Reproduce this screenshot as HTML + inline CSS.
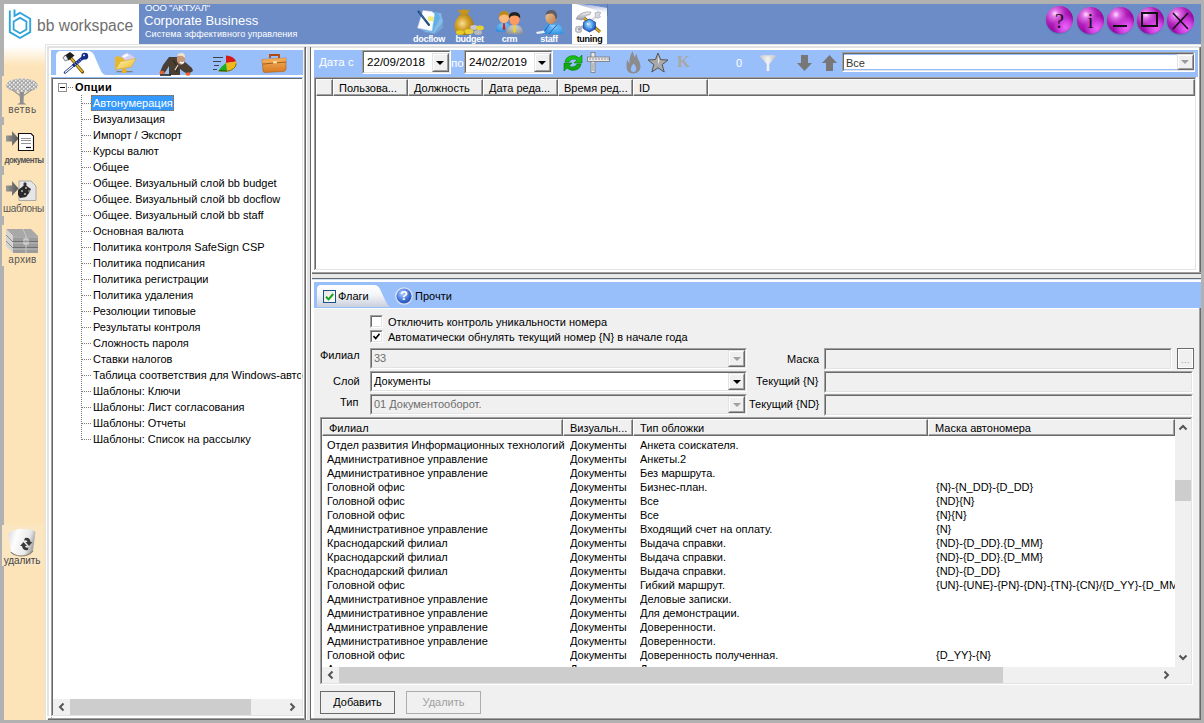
<!DOCTYPE html>
<html><head><meta charset="utf-8"><style>
html,body{margin:0;padding:0;width:1204px;height:723px;overflow:hidden;background:#b1b1b1}
body{position:relative;font-family:"Liberation Sans", sans-serif;font-size:11px}
div,svg{position:absolute}
.t{white-space:nowrap}
</style></head><body>
<div style="left:0;top:0;width:1204px;height:723px;background:#b1b1b1"></div>
<div style="left:4px;top:4px;width:135px;height:40px;background:#fff"></div>
<div style="left:139px;top:4px;width:1062px;height:40px;background:#6c8cc8"></div>
<div style="left:4px;top:44px;width:41px;height:676px;background:linear-gradient(#fff 0px,#fff 2px,#fde4b8 22px,#fde4b8 100%)"></div>
<div style="left:45px;top:44px;width:1156px;height:676px;background:#f0f0f0"></div>
<div style="left:45px;top:44px;width:1156px;height:2px;background:#fff"></div>
<svg style="left:0px;top:0px" width="40" height="44" viewBox="0 0 40 44">
<path d="M14.5 9.5 V15.8 L20 12.8 L30.2 18.8 V32.2 L20 38 L9.8 32.2 V10.5" fill="none" stroke="#2ea3dc" stroke-width="1.9"/>
<path d="M13.6 21.5 L20 17.9 L26.4 21.5 V29.5 L20 33.2 L13.6 29.5 Z" fill="none" stroke="#2ea3dc" stroke-width="1.8"/>
</svg>
<div class="t" style="left:37px;top:16px;height:20px;line-height:20px;font-size:15.6px;color:#6f6f6f;letter-spacing:0px">bb workspace</div>
<div class="t" style="left:145px;top:2px;height:12px;line-height:12px;font-size:9.5px;color:#ffffff;letter-spacing:-0.2px">ООО "АКТУАЛ"</div>
<div class="t" style="left:144px;top:13px;height:16px;line-height:16px;font-size:13px;color:#fff">Corporate Business</div>
<div class="t" style="left:145px;top:28px;height:12px;line-height:12px;font-size:9px;color:#fff;letter-spacing:0.05px">Система эффективного управления</div>
<div style="left:572px;top:4px;width:35px;height:40px;background:#fff"></div>
<svg style="left:572px;top:4px" width="36" height="12" viewBox="0 0 36 12"><defs><linearGradient id="curl" x1="0" y1="0" x2="0" y2="1"><stop offset="0" stop-color="#8ea0cc"/><stop offset="1" stop-color="#fff" stop-opacity="0"/></linearGradient></defs><path d="M4 0 Q20 1 35 4 L35 11 Q20 4 4 0 Z" fill="url(#curl)"/><path d="M6 0 L35 0 L35 4 Q20 0.8 6 0 Z" fill="#6c8cc8"/><rect x="35" y="0" width="1" height="40" fill="#5a78b0"/></svg>
<div class="t" style="left:404px;top:33px;width:50px;text-align:center;height:12px;line-height:12px;font-size:9px;font-weight:bold;letter-spacing:-0.3px;color:#fff">docflow</div>
<div class="t" style="left:444.5px;top:33px;width:50px;text-align:center;height:12px;line-height:12px;font-size:9px;font-weight:bold;letter-spacing:-0.3px;color:#fff">budget</div>
<div class="t" style="left:484.5px;top:33px;width:50px;text-align:center;height:12px;line-height:12px;font-size:9px;font-weight:bold;letter-spacing:-0.3px;color:#fff">crm</div>
<div class="t" style="left:524px;top:33px;width:50px;text-align:center;height:12px;line-height:12px;font-size:9px;font-weight:bold;letter-spacing:-0.3px;color:#fff">staff</div>
<div class="t" style="left:564.5px;top:33px;width:50px;text-align:center;height:12px;line-height:12px;font-size:9px;font-weight:bold;letter-spacing:-0.3px;color:#000">tuning</div>
<svg style="left:415px;top:9px" width="30" height="26" viewBox="0 0 30 26">
<path d="M9 23 L20 25 L28 19 L27 9 Z" fill="#7ab0dc" opacity="0.7"/>
<path d="M8 22 L19 24 L28 13 L26 4 L18 4 Z" fill="#8cc4ec" opacity="0.75"/>
<path d="M6 21 L18 23 L25 9 L22 3 L18 3 Z" fill="#5fb0e8"/>
<path d="M2.5 19 L8 1.5 L17 2.5 L19.5 5 L17 22 Z" fill="#fbfcff" stroke="#c8d4e4" stroke-width="0.5"/>
<path d="M13.5 7 L19 8 L18 12.5 L12.5 11.5 Z" fill="#f2ec78"/>
<path d="M3.5 2.5 L14 16" stroke="#1e4c7c" stroke-width="2.1" stroke-linecap="round"/>
<path d="M4 3 L10 11" stroke="#4a7cae" stroke-width="0.7"/>
</svg>
<svg style="left:452px;top:8px" width="34" height="28" viewBox="0 0 34 28">
<defs><radialGradient id="bag" cx="0.4" cy="0.45" r="0.65"><stop offset="0" stop-color="#f8dc96"/><stop offset="0.45" stop-color="#d4a22a"/><stop offset="1" stop-color="#9a7010"/></radialGradient></defs>
<path d="M5 1.5 Q9 3 12 1 Q15 3 18 1.5 L15.5 6 L9 6 Z" fill="#c8941e"/>
<path d="M9 6 L15.5 6 Q23 12 22 21 Q20 27 12 27 Q3 27 2.5 20 Q2 12 9 6 Z" fill="url(#bag)"/>
<ellipse cx="8" cy="24.5" rx="4" ry="2.3" fill="#e6cc20"/>
<ellipse cx="17" cy="23.5" rx="4.5" ry="2.6" fill="#e8d030"/>
<ellipse cx="22" cy="19.5" rx="3.8" ry="2.4" fill="#c8c8cc"/>
<ellipse cx="28" cy="20" rx="3.8" ry="2.4" fill="#e8d030"/>
<ellipse cx="26" cy="24.5" rx="4" ry="2.5" fill="#b8b8bc"/>
</svg>
<svg style="left:494px;top:9px" width="30" height="26" viewBox="0 0 30 26">
<defs><radialGradient id="bs" cx="0.5" cy="0.3" r="0.8"><stop offset="0" stop-color="#7cc8f8"/><stop offset="1" stop-color="#2a86dc"/></radialGradient>
<radialGradient id="gs" cx="0.5" cy="0.3" r="0.8"><stop offset="0" stop-color="#d0d0d0"/><stop offset="1" stop-color="#8a8a8a"/></radialGradient></defs>
<path d="M1.5 22 Q1.5 14 10 13.5 Q17.5 14 17.5 22 Q16 23 10 23 Q3 23 1.5 22 Z" fill="url(#bs)"/>
<path d="M9.2 14 L10.8 14 L11.3 20 L10 21.5 L8.7 20 Z" fill="#d42020"/>
<ellipse cx="10" cy="8.5" rx="5" ry="5.8" fill="#fbb878"/>
<path d="M5 8.5 Q4.5 2 10.5 2 Q15.5 2 15 8 Q14 5.5 10 5.5 Q6 6 5 8.5 Z" fill="#c08818"/>
<path d="M12 24.5 Q12 16 20.5 15.5 Q29 16 29 24.5 Q27 25.5 20.5 25.5 Q14 25.5 12 24.5 Z" fill="url(#gs)"/>
<path d="M19.7 16 L21.3 16 L21.8 22.5 L20.5 24 L19.2 22.5 Z" fill="#f0d020"/>
<ellipse cx="20.5" cy="10" rx="5.2" ry="6.2" fill="#fc9a60"/>
<path d="M15 9.5 Q14 3 20.5 3 Q27 3 26 9.5 Q24.5 6.5 20.5 6.5 Q16.5 6.5 15 9.5 Z" fill="#222"/>
</svg>
<svg style="left:535px;top:9px" width="29" height="26" viewBox="0 0 29 26">
<defs><radialGradient id="shirt" cx="0.6" cy="0.4" r="0.7"><stop offset="0" stop-color="#6ec4fa"/><stop offset="1" stop-color="#2a8ee0"/></radialGradient>
<linearGradient id="skin" x1="0" y1="0" x2="1" y2="1"><stop offset="0" stop-color="#f4c89a"/><stop offset="1" stop-color="#b87a48"/></linearGradient></defs>
<path d="M8 25 Q8 16 14 14.5 L22 14.5 Q28 16 28 25 Z" fill="url(#shirt)"/>
<path d="M14 16 L18 19 L22 16" fill="#8ec8f0"/>
<ellipse cx="16" cy="8.5" rx="5.5" ry="6.5" fill="url(#skin)"/>
<path d="M10.5 6 Q11 1 16.5 1 Q22.5 1 22 9 L20.5 10 Q20 4.5 16 4.5 Q12 4.5 10.5 6 Z" fill="#5e5e62"/>
<path d="M14 15.5 L8.5 24 M22 15.5 L14 25" stroke="#4a4aa0" stroke-width="0.9"/>
<path d="M1 23 L9 21.5 L10 24 L2 25 Z" fill="#e8eef6"/>
</svg>
<svg style="left:575px;top:11px" width="28" height="22" viewBox="0 0 28 22">
<defs><radialGradient id="glb" cx="0.45" cy="0.4" r="0.65"><stop offset="0" stop-color="#bfe4ff"/><stop offset="0.5" stop-color="#4a9ae8"/><stop offset="1" stop-color="#1a3fb0"/></radialGradient>
<linearGradient id="slv" x1="0" y1="0" x2="0" y2="1"><stop offset="0" stop-color="#f0f0f4"/><stop offset="1" stop-color="#9a9aa8"/></linearGradient></defs>
<path d="M3 19 L23 4" stroke="url(#slv)" stroke-width="2.6"/>
<circle cx="3.5" cy="18.5" r="2.8" fill="none" stroke="#b8b8c0" stroke-width="1.8"/>
<path d="M20 2 Q23 -0.5 26 2 L24 4 L25.5 6 Q23 8 20.5 6.5 Z" fill="#d8d8e0" stroke="#9a9aa8" stroke-width="0.6"/>
<path d="M9 7 L25 21" stroke="#8a6a10" stroke-width="3"/>
<path d="M9 7 L25 21" stroke="#e0b020" stroke-width="1.6"/>
<path d="M1 8 L3 5 Q8 0 16 1 L15 3.5 Q11 3.5 9 7 L7 9 Z" fill="url(#slv)" stroke="#8a8a96" stroke-width="0.6"/>
<path d="M14.5 8 L20.5 11.3 V17.7 L14.5 21 L8.5 17.7 V11.3 Z" fill="url(#glb)" stroke="#1a3aa0" stroke-width="0.7"/>
<circle cx="12.5" cy="13" r="0.8" fill="#fff"/><circle cx="16" cy="16" r="0.6" fill="#fff"/>
</svg>
<div style="left:1045.0px;top:7.0px;width:28px;height:28px;border-radius:50%;background:radial-gradient(circle at 50% 50%,rgba(30,60,120,0.45) 55%,rgba(30,60,120,0) 72%)"></div>
<div style="left:1046.0px;top:6.0px;width:27px;height:27px;border-radius:50%;background:radial-gradient(circle at 72% 78%,#f060f8 0%,#d040e0 22%,rgba(160,0,170,0) 45%),radial-gradient(circle at 33% 28%,#fde0fd 0%,#e070e8 14%,#b020b8 40%,#9000a0 70%,#a010b0 100%)"></div>
<div style="left:1075.5px;top:8.0px;width:28px;height:28px;border-radius:50%;background:radial-gradient(circle at 50% 50%,rgba(30,60,120,0.45) 55%,rgba(30,60,120,0) 72%)"></div>
<div style="left:1076.5px;top:7.0px;width:27px;height:27px;border-radius:50%;background:radial-gradient(circle at 72% 78%,#f060f8 0%,#d040e0 22%,rgba(160,0,170,0) 45%),radial-gradient(circle at 33% 28%,#fde0fd 0%,#e070e8 14%,#b020b8 40%,#9000a0 70%,#a010b0 100%)"></div>
<div style="left:1105.5px;top:7.5px;width:28px;height:28px;border-radius:50%;background:radial-gradient(circle at 50% 50%,rgba(30,60,120,0.45) 55%,rgba(30,60,120,0) 72%)"></div>
<div style="left:1106.5px;top:6.5px;width:27px;height:27px;border-radius:50%;background:radial-gradient(circle at 72% 78%,#f060f8 0%,#d040e0 22%,rgba(160,0,170,0) 45%),radial-gradient(circle at 33% 28%,#fde0fd 0%,#e070e8 14%,#b020b8 40%,#9000a0 70%,#a010b0 100%)"></div>
<div style="left:1135.5px;top:7.5px;width:28px;height:28px;border-radius:50%;background:radial-gradient(circle at 50% 50%,rgba(30,60,120,0.45) 55%,rgba(30,60,120,0) 72%)"></div>
<div style="left:1136.5px;top:6.5px;width:27px;height:27px;border-radius:50%;background:radial-gradient(circle at 72% 78%,#f060f8 0%,#d040e0 22%,rgba(160,0,170,0) 45%),radial-gradient(circle at 33% 28%,#fde0fd 0%,#e070e8 14%,#b020b8 40%,#9000a0 70%,#a010b0 100%)"></div>
<div style="left:1165.5px;top:7.5px;width:28px;height:28px;border-radius:50%;background:radial-gradient(circle at 50% 50%,rgba(30,60,120,0.45) 55%,rgba(30,60,120,0) 72%)"></div>
<div style="left:1166.5px;top:6.5px;width:27px;height:27px;border-radius:50%;background:radial-gradient(circle at 72% 78%,#f060f8 0%,#d040e0 22%,rgba(160,0,170,0) 45%),radial-gradient(circle at 33% 28%,#fde0fd 0%,#e070e8 14%,#b020b8 40%,#9000a0 70%,#a010b0 100%)"></div>
<div class="t" style="left:1052px;top:11px;width:15px;text-align:center;font-family:'Liberation Serif',serif;font-size:20px;line-height:20px;color:#111">?</div>
<div class="t" style="left:1083px;top:11px;width:15px;text-align:center;font-family:'Liberation Serif',serif;font-size:20px;line-height:20px;color:#111">i</div>
<div style="left:1113px;top:25px;width:14px;height:2px;background:#111"></div>
<div style="left:1141px;top:12px;width:17px;height:15px;border:2px solid #111;box-sizing:border-box"></div>
<svg style="left:1172px;top:12px" width="17" height="18" viewBox="0 0 17 18"><path d="M1 1 L16 17 M16 1 L1 17" stroke="#111" stroke-width="1.6"/></svg>
<div style="left:2px;top:76px;width:2px;height:41px;background:#fde4b8"></div>
<div style="left:2px;top:125px;width:2px;height:41px;background:#fde4b8"></div>
<div style="left:2px;top:175px;width:2px;height:41px;background:#fde4b8"></div>
<div style="left:2px;top:225px;width:2px;height:41px;background:#fde4b8"></div>
<div style="left:2px;top:525px;width:2px;height:41px;background:#fde4b8"></div>
<svg style="left:5px;top:78px" width="34" height="28" viewBox="0 0 34 28">
<defs><pattern id="spk" width="4" height="4" patternUnits="userSpaceOnUse"><rect width="4" height="4" fill="#b4b4b4"/><rect x="0" y="0" width="1.5" height="1.5" fill="#f6f6f6"/><rect x="2" y="2" width="1.5" height="1.5" fill="#e8e8e8"/><rect x="2.5" y="0" width="1" height="1" fill="#888"/><rect x="0.5" y="2.5" width="1" height="1" fill="#999"/></pattern></defs>
<path d="M1 8 Q2 3 8 1.5 Q17 -0.5 26 1.5 Q32 3 33 8 Q33 11 27 12.5 Q21 13.5 18.5 14.5 L15.5 14.5 Q13 13.5 7 12.5 Q1 11 1 8 Z" fill="url(#spk)"/>
<path d="M14.5 14 L15 24.5 L12 26.5 L21.5 26.5 L18.5 24.5 L19 14 Z" fill="#8e8e8e"/>
<path d="M15.5 18 L7 11.5 M18 18 L27 11.5" stroke="#9a9a9a" stroke-width="1.4"/>
</svg>
<div class="t" style="left:4px;top:103px;height:14px;line-height:14px;font-size:10px;color:#555;width:37px;text-align:center;letter-spacing:0.6px">ветвь</div>
<svg style="left:5px;top:130px" width="32" height="22" viewBox="0 0 32 22">
<defs><linearGradient id="arr" x1="0" x2="1"><stop offset="0" stop-color="#9a9a9a"/><stop offset="1" stop-color="#555"/></linearGradient></defs>
<path d="M1 5.5 L7 5.5 L7 1 L13.5 8.5 L7 16 L7 11.5 L1 11.5 Z" fill="url(#arr)"/>
<path d="M13.5 3.5 L26 3.5 L28.5 6 L28.5 20.5 L13.5 20.5 Z" fill="#fff" stroke="#111" stroke-width="1.1"/>
<path d="M16 8.5 H26 M16 10.5 H26 M16 13.5 H26" stroke="#777" stroke-width="0.8"/>
<path d="M21 17.5 H26" stroke="#111" stroke-width="1.2"/>
</svg>
<div class="t" style="left:2px;top:153px;height:14px;line-height:14px;font-size:9px;color:#555;width:41px;text-align:center;letter-spacing:-0.6px;font-weight:bold;transform:scaleX(0.88)">документы</div>
<svg style="left:5px;top:180px" width="32" height="22" viewBox="0 0 32 22">
<path d="M1 5.5 L7 5.5 L7 1 L13.5 8.5 L7 16 L7 11.5 L1 11.5 Z" fill="url(#arr)"/>
<path d="M14 1 L26 1 L31 6 L31 20.5 L14 20.5 Z" fill="#e6e6e6" stroke="#9a9a9a" stroke-width="0.8"/>
<path d="M13 10 L17 7 L20 4 L23 7 L26 9 L24 13 L21 17 L15 18 L13 15 Z" fill="#2a2a2a"/>
<path d="M20 2 L22 4 L20 6 L18 4 Z" fill="#333"/>
<circle cx="17" cy="11" r="1" fill="#bbb"/><circle cx="21" cy="8" r="1" fill="#bbb"/><circle cx="20" cy="14" r="1" fill="#bbb"/><circle cx="24" cy="11" r="0.8" fill="#bbb"/>
</svg>
<div class="t" style="left:3px;top:202px;height:14px;line-height:14px;font-size:10px;color:#555;width:38px;text-align:center;letter-spacing:-0.3px">шаблоны</div>
<svg style="left:6px;top:228px" width="33" height="26" viewBox="0 0 33 26">
<path d="M0 1 L25 1 L32 8 L7 8 Z" fill="#a8a8a8"/>
<path d="M0 1 L7 8 L7 25 L0 18 Z" fill="#d4d4d4"/>
<path d="M0 7 L7 14 M0 13 L7 20" stroke="#8a8a8a" stroke-width="1"/>
<rect x="7" y="8" width="25" height="17" fill="#9c9c9c"/>
<path d="M7 13.5 H32 M7 19.5 H32" stroke="#6f6f6f" stroke-width="1"/>
<path d="M7 9 H32 M7 15 H32 M7 21 H32" stroke="#b9b9b9" stroke-width="1"/>
<path d="M17 1 L20 8 V25" stroke="#c8c8c8" stroke-width="1" fill="none"/>
<rect x="18" y="11" width="4" height="5" fill="none" stroke="#e8e8e8" stroke-width="0.8"/>
</svg>
<div class="t" style="left:4px;top:253px;height:14px;line-height:14px;font-size:10px;color:#555;width:37px;text-align:center;letter-spacing:0.3px">архив</div>
<div style="left:2px;top:525px;width:41px;height:41px;background:#fbe6c2"></div>
<svg style="left:7px;top:527px" width="30" height="30" viewBox="0 0 30 30">
<defs><linearGradient id="bin" x1="0" x2="1" y1="0" y2="0.3"><stop offset="0" stop-color="#d8d8d8"/><stop offset="0.35" stop-color="#fdfdfd"/><stop offset="0.8" stop-color="#e8e8e8"/><stop offset="1" stop-color="#a8a8a8"/></linearGradient></defs>
<path d="M1 7 Q8 1 18 2 Q26 2 28.5 5 L26 24 Q22 29 13 29 Q6 28 4 25 Z" fill="url(#bin)"/>
<path d="M4 25 Q6 28 13 29 Q22 29 26 24" fill="none" stroke="#8a8070" stroke-width="1.2"/>
<path d="M18 11 Q23 10 23.5 15 L25.5 15 L22 19 L18.5 15 L20.5 15 Q20 12.5 17 13.5 Z" fill="#3a3a3a"/>
<path d="M21 23 Q15.5 24 15 19 L13 19 L16.5 15 L20 19 L18 19 Q18.5 21.5 21.5 20.5 Z" fill="#3a3a3a"/>
</svg>
<div class="t" style="left:3px;top:554px;height:14px;line-height:14px;font-size:10px;color:#444;width:38px;text-align:center;letter-spacing:-0.1px">удалить</div>
<div style="left:45px;top:44px;width:1156px;height:1px;background:#e3e3e3"></div>
<div style="left:45px;top:44px;width:1px;height:676px;background:#e3e3e3"></div>
<div style="left:46px;top:45px;width:1154px;height:1px;background:#fff"></div>
<div style="left:46px;top:45px;width:1px;height:674px;background:#fff"></div>
<div style="left:48px;top:718px;width:1153px;height:1px;background:#a0a0a0"></div>
<div style="left:48px;top:719px;width:1153px;height:1px;background:#696969"></div>
<div style="left:47px;top:46px;width:1152px;height:2px;background:#e3e3e3"></div>
<div style="left:47px;top:46px;width:2px;height:672px;background:#e3e3e3"></div>
<div style="left:49px;top:48px;width:1150px;height:2px;background:#fff"></div>
<div style="left:49px;top:48px;width:2px;height:670px;background:#fff"></div>
<div style="left:304px;top:47px;width:1px;height:673px;background:#a0a0a0"></div>
<div style="left:305px;top:47px;width:1px;height:673px;background:#696969"></div>
<div style="left:47px;top:716px;width:257px;height:2px;background:#fff"></div>
<div style="left:306px;top:48px;width:1px;height:672px;background:#fff"></div>
<div style="left:307px;top:48px;width:3px;height:672px;background:#e3e3e3"></div>
<div style="left:51px;top:50px;width:252px;height:28px;background:#99bffa"></div>
<div style="left:51px;top:75px;width:252px;height:2px;background:#fff"></div>
<svg style="left:55px;top:50px" width="52" height="27" viewBox="0 0 52 27">
<path d="M1 27 V6 Q1 1 6 1 L33 1 Q37 1 39 5 L46 21 Q48 25 51 25 L51 27 Z" fill="#fff"/>
</svg>
<svg style="left:62px;top:51px" width="28" height="23" viewBox="0 0 28 23">
<path d="M8 6 L20.5 21" stroke="#6b4a0a" stroke-width="3.2" stroke-linecap="round"/>
<path d="M8 6 L20.5 21" stroke="#e9b823" stroke-width="1.7"/>
<path d="M2 5 L8 1 L12.5 4.5 L6.5 9.5 Z" fill="#1e1e1e"/>
<path d="M0.8 6.5 L3.8 4.2 L6.3 8.5 L3.3 10 Z" fill="#e6eefa" stroke="#333" stroke-width="0.6"/>
<path d="M3 21.5 L12 14" stroke="#1a2f80" stroke-width="2.4" stroke-linecap="round"/>
<path d="M3 21.5 L12 14" stroke="#f2f6ff" stroke-width="1.1"/>
<path d="M11 15 L20.5 7" stroke="#142a88" stroke-width="3.4"/>
<path d="M12.5 12.5 L14 14.2 M14.3 11 L15.8 12.7 M16.1 9.5 L17.6 11.2 M17.9 8 L19.4 9.7" stroke="#cfdcff" stroke-width="0.7"/>
<circle cx="22.8" cy="5.2" r="3.4" fill="#132b85"/>
<circle cx="22" cy="4.2" r="1" fill="#dfe8ff"/>
</svg>
<svg style="left:114px;top:52px" width="23" height="22" viewBox="0 0 23 22">
<defs><linearGradient id="fld" x1="0" y1="0" x2="1" y2="1"><stop offset="0" stop-color="#fff6b0"/><stop offset="1" stop-color="#e8b830"/></linearGradient></defs>
<path d="M1 5 L5 4 L6.5 5.5 L12 5.5 L12 14 L1 17.5 Z" fill="#e6b830"/>
<path d="M7 4 L13 0.5 L21 5.5 L15 12.5 Z" fill="#d6cff2"/>
<path d="M8 4.2 L12.5 1.8 L15 3.2 L10.5 5.8 Z" fill="#fff"/>
<path d="M1.5 17.5 L6.5 9.5 L22 6.5 L17.5 15 Z" fill="url(#fld)" stroke="#d0a020" stroke-width="0.5"/>
<path d="M2.5 19.5 H18.5" stroke="#555" stroke-width="1.4"/>
<path d="M2.5 19 H18.5" stroke="#eee" stroke-width="0.6"/>
<rect x="8" y="16.5" width="4.5" height="4.5" rx="1" fill="#f0b020"/>
</svg>
<svg style="left:159px;top:52px" width="36" height="24" viewBox="0 0 36 24">
<path d="M10 5 L18 5 L26 10 L33 16 L34 19 L29 22 L25 20 L21 17 L21 23 L10 23 L10 14 L5 22 L1 20 L4 13 Z" fill="#4b3f33"/>
<path d="M14 8 L19 16 L17 20" stroke="#2a221c" stroke-width="1" fill="none"/>
<path d="M16 18 L19 13" stroke="#e8e0d0" stroke-width="1.2"/>
<ellipse cx="22" cy="7" rx="4.2" ry="5.8" fill="#c8987a"/>
<path d="M18 4 Q19 0.5 23 1 Q26.5 1.5 26 6 Q24 3 18 4 Z" fill="#eee4cc"/>
<path d="M21 10 Q23 12 25 10" stroke="#fff" stroke-width="1.2" fill="none"/>
<ellipse cx="3" cy="20.5" rx="2.5" ry="1.8" fill="#e8602a"/>
<ellipse cx="29" cy="22" rx="2.5" ry="1.8" fill="#e8602a"/>
<path d="M1 23 L12 23" stroke="#222" stroke-width="1.6"/>
</svg>
<svg style="left:212px;top:55px" width="26" height="18" viewBox="0 0 26 18">
<path d="M1 2.5 H11 M1 6.5 H9 M2 10.5 H7 M1 14.5 H5" stroke="#333" stroke-width="0.9"/>
<path d="M14 8 L14 0.5 A10.5 7.8 0 0 1 24.2 6.5 Z" fill="#d81818"/>
<path d="M14 8 L24.2 6.5 A10.5 8 0 0 1 15 16.2 Z" fill="#f0b818"/>
<path d="M14 8 L15 16.2 L6.5 16 Q9.5 11 14 8 Z" fill="#1cb01c"/>
<path d="M6.5 16 L15 16.2 A10.5 8 0 0 0 24.2 8.5" fill="none" stroke="#8a6a00" stroke-width="1"/>
<path d="M7 15.5 L14.5 15.8" stroke="#0a700a" stroke-width="1"/>
</svg>
<svg style="left:261px;top:54px" width="27" height="19" viewBox="0 0 27 19">
<defs><linearGradient id="bc" x1="0" y1="0" x2="0" y2="1"><stop offset="0" stop-color="#f4b060"/><stop offset="1" stop-color="#d87a20"/></linearGradient></defs>
<path d="M9 4 V1 H18 V4" fill="none" stroke="#b04810" stroke-width="1.8"/>
<path d="M1 5.5 L25 4 L25 15 Q25 17 22 17.5 L4 18.5 Q2 18.5 2 16.5 Z" fill="url(#bc)" stroke="#a85a18" stroke-width="0.6"/>
<path d="M1 5.5 L25 4 L25 8 L2 10 Z" fill="#f2a850"/>
<path d="M2 10 L25 8" stroke="#8a4a10" stroke-width="0.8"/>
<rect x="12" y="7" width="4" height="2.5" fill="#f8dc90"/>
</svg>
<div style="left:51px;top:77px;width:252px;height:1px;background:#99bffa"></div>
<div style="left:51px;top:77px;width:1px;height:641px;background:#a0a0a0"></div>
<div style="left:52px;top:78px;width:251px;height:1px;background:#696969"></div>
<div style="left:52px;top:78px;width:1px;height:638px;background:#696969"></div>
<div style="left:53px;top:79px;width:249px;height:636px;background:#fff"></div>
<div style="left:302px;top:78px;width:1px;height:638px;background:#e3e3e3"></div>
<div style="left:52px;top:715px;width:251px;height:1px;background:#e3e3e3"></div>
<div style="left:303px;top:77px;width:1px;height:640px;background:#fff"></div>
<div style="left:51px;top:716px;width:253px;height:1px;background:#fff"></div>
<div style="left:58px;top:83px;width:9px;height:9px;border:1px solid #919191;box-sizing:border-box;background:#fff"></div>
<div style="left:60px;top:87px;width:5px;height:1px;background:#000"></div>
<div style="left:68px;top:87px;width:5px;height:1px;background:repeating-linear-gradient(90deg,#7a7a7a 0 1px,transparent 1px 2px)"></div>
<div style="left:81px;top:95px;width:1px;height:345px;background:repeating-linear-gradient(180deg,#7a7a7a 0 1px,transparent 1px 2px)"></div>
<div class="t" style="left:75px;top:79px;height:16px;line-height:16px;font-weight:bold;color:#000;letter-spacing:0.3px">Опции</div>
<div style="left:82px;top:103px;width:9px;height:1px;background:repeating-linear-gradient(90deg,#7a7a7a 0 1px,transparent 1px 2px)"></div>
<div style="left:91px;top:95px;width:83px;height:16px;background:#3399ff;border:1px dotted #b8620c;box-sizing:border-box"></div>
<div class="t" style="left:93px;top:95px;height:16px;line-height:16px;color:#fff">Автонумерация</div>
<div style="left:82px;top:119px;width:9px;height:1px;background:repeating-linear-gradient(90deg,#7a7a7a 0 1px,transparent 1px 2px)"></div>
<div class="t" style="left:93px;top:111px;height:16px;line-height:16px;color:#000">Визуализация</div>
<div style="left:82px;top:135px;width:9px;height:1px;background:repeating-linear-gradient(90deg,#7a7a7a 0 1px,transparent 1px 2px)"></div>
<div class="t" style="left:93px;top:127px;height:16px;line-height:16px;color:#000">Импорт / Экспорт</div>
<div style="left:82px;top:151px;width:9px;height:1px;background:repeating-linear-gradient(90deg,#7a7a7a 0 1px,transparent 1px 2px)"></div>
<div class="t" style="left:93px;top:143px;height:16px;line-height:16px;color:#000">Курсы валют</div>
<div style="left:82px;top:167px;width:9px;height:1px;background:repeating-linear-gradient(90deg,#7a7a7a 0 1px,transparent 1px 2px)"></div>
<div class="t" style="left:93px;top:159px;height:16px;line-height:16px;color:#000">Общее</div>
<div style="left:82px;top:183px;width:9px;height:1px;background:repeating-linear-gradient(90deg,#7a7a7a 0 1px,transparent 1px 2px)"></div>
<div class="t" style="left:93px;top:175px;height:16px;line-height:16px;color:#000">Общее. Визуальный слой bb budget</div>
<div style="left:82px;top:199px;width:9px;height:1px;background:repeating-linear-gradient(90deg,#7a7a7a 0 1px,transparent 1px 2px)"></div>
<div class="t" style="left:93px;top:191px;height:16px;line-height:16px;color:#000">Общее. Визуальный слой bb docflow</div>
<div style="left:82px;top:215px;width:9px;height:1px;background:repeating-linear-gradient(90deg,#7a7a7a 0 1px,transparent 1px 2px)"></div>
<div class="t" style="left:93px;top:207px;height:16px;line-height:16px;color:#000">Общее. Визуальный слой bb staff</div>
<div style="left:82px;top:231px;width:9px;height:1px;background:repeating-linear-gradient(90deg,#7a7a7a 0 1px,transparent 1px 2px)"></div>
<div class="t" style="left:93px;top:223px;height:16px;line-height:16px;color:#000">Основная валюта</div>
<div style="left:82px;top:247px;width:9px;height:1px;background:repeating-linear-gradient(90deg,#7a7a7a 0 1px,transparent 1px 2px)"></div>
<div class="t" style="left:93px;top:239px;height:16px;line-height:16px;color:#000">Политика контроля SafeSign CSP</div>
<div style="left:82px;top:263px;width:9px;height:1px;background:repeating-linear-gradient(90deg,#7a7a7a 0 1px,transparent 1px 2px)"></div>
<div class="t" style="left:93px;top:255px;height:16px;line-height:16px;color:#000">Политика подписания</div>
<div style="left:82px;top:279px;width:9px;height:1px;background:repeating-linear-gradient(90deg,#7a7a7a 0 1px,transparent 1px 2px)"></div>
<div class="t" style="left:93px;top:271px;height:16px;line-height:16px;color:#000">Политика регистрации</div>
<div style="left:82px;top:295px;width:9px;height:1px;background:repeating-linear-gradient(90deg,#7a7a7a 0 1px,transparent 1px 2px)"></div>
<div class="t" style="left:93px;top:287px;height:16px;line-height:16px;color:#000">Политика удаления</div>
<div style="left:82px;top:311px;width:9px;height:1px;background:repeating-linear-gradient(90deg,#7a7a7a 0 1px,transparent 1px 2px)"></div>
<div class="t" style="left:93px;top:303px;height:16px;line-height:16px;color:#000">Резолюции типовые</div>
<div style="left:82px;top:327px;width:9px;height:1px;background:repeating-linear-gradient(90deg,#7a7a7a 0 1px,transparent 1px 2px)"></div>
<div class="t" style="left:93px;top:319px;height:16px;line-height:16px;color:#000">Результаты контроля</div>
<div style="left:82px;top:343px;width:9px;height:1px;background:repeating-linear-gradient(90deg,#7a7a7a 0 1px,transparent 1px 2px)"></div>
<div class="t" style="left:93px;top:335px;height:16px;line-height:16px;color:#000">Сложность пароля</div>
<div style="left:82px;top:359px;width:9px;height:1px;background:repeating-linear-gradient(90deg,#7a7a7a 0 1px,transparent 1px 2px)"></div>
<div class="t" style="left:93px;top:351px;height:16px;line-height:16px;color:#000">Ставки налогов</div>
<div style="left:82px;top:375px;width:9px;height:1px;background:repeating-linear-gradient(90deg,#7a7a7a 0 1px,transparent 1px 2px)"></div>
<div class="t" style="left:93px;top:367px;height:16px;line-height:16px;color:#000">Таблица соответствия для Windows-авто</div>
<div style="left:82px;top:391px;width:9px;height:1px;background:repeating-linear-gradient(90deg,#7a7a7a 0 1px,transparent 1px 2px)"></div>
<div class="t" style="left:93px;top:383px;height:16px;line-height:16px;color:#000">Шаблоны: Ключи</div>
<div style="left:82px;top:407px;width:9px;height:1px;background:repeating-linear-gradient(90deg,#7a7a7a 0 1px,transparent 1px 2px)"></div>
<div class="t" style="left:93px;top:399px;height:16px;line-height:16px;color:#000">Шаблоны: Лист согласования</div>
<div style="left:82px;top:423px;width:9px;height:1px;background:repeating-linear-gradient(90deg,#7a7a7a 0 1px,transparent 1px 2px)"></div>
<div class="t" style="left:93px;top:415px;height:16px;line-height:16px;color:#000">Шаблоны: Отчеты</div>
<div style="left:82px;top:439px;width:9px;height:1px;background:repeating-linear-gradient(90deg,#7a7a7a 0 1px,transparent 1px 2px)"></div>
<div class="t" style="left:93px;top:431px;height:16px;line-height:16px;color:#000">Шаблоны: Список на рассылку</div>
<div style="left:301px;top:79px;width:1px;height:636px;background:#fff"></div>
<div style="left:53px;top:699px;width:249px;height:16px;background:#f0f0f0"></div>
<div style="left:70px;top:699px;width:181px;height:16px;background:#cdcdcd"></div>
<svg style="left:57px;top:702px" width="10" height="10" viewBox="0 0 10 10"><path d="M6.5 1.5 L3 5 L6.5 8.5" fill="none" stroke="#555" stroke-width="2"/></svg>
<svg style="left:287px;top:702px" width="10" height="10" viewBox="0 0 10 10"><path d="M3.5 1.5 L7 5 L3.5 8.5" fill="none" stroke="#555" stroke-width="2"/></svg>
<div style="left:310px;top:47px;width:1px;height:673px;background:#696969"></div>
<div style="left:311px;top:48px;width:3px;height:670px;background:#fff"></div>
<div style="left:1198px;top:48px;width:1px;height:225px;background:#fff"></div>
<div style="left:314px;top:50px;width:884px;height:27px;background:#99bffa"></div>
<div class="t" style="left:319px;top:54px;height:16px;line-height:16px;font-size:11.6px;color:#fff">Дата с</div>
<div style="left:362px;top:50px;width:89px;height:24px;background:#fff;border-top:1px solid #a0a0a0;border-left:1px solid #a0a0a0;border-right:1px solid #fff;border-bottom:1px solid #fff;box-sizing:border-box"></div>
<div style="left:363px;top:51px;width:87px;height:22px;border-top:1px solid #696969;border-left:1px solid #696969;border-right:1px solid #e3e3e3;border-bottom:1px solid #e3e3e3;box-sizing:border-box"></div>
<div class="t" style="left:367px;top:54px;height:16px;line-height:16px;font-size:11.6px;color:#000">22/09/2018</div>
<div style="left:432px;top:53px;width:17px;height:19px;background:#f0f0f0;border-top:1px solid #e3e3e3;border-left:1px solid #e3e3e3;border-right:1px solid #696969;border-bottom:1px solid #696969;box-sizing:border-box"></div>
<div style="left:433px;top:54px;width:15px;height:17px;border-top:1px solid #fff;border-left:1px solid #fff;border-right:1px solid #a0a0a0;border-bottom:1px solid #a0a0a0;box-sizing:border-box"></div>
<div style="left:436px;top:61px;width:0;height:0;border-left:4px solid transparent;border-right:4px solid transparent;border-top:4px solid #000"></div>
<div class="t" style="left:451px;top:55px;height:16px;line-height:16px;font-size:11.6px;color:#fff">по</div>
<div style="left:464px;top:50px;width:89px;height:24px;background:#fff;border-top:1px solid #a0a0a0;border-left:1px solid #a0a0a0;border-right:1px solid #fff;border-bottom:1px solid #fff;box-sizing:border-box"></div>
<div style="left:465px;top:51px;width:87px;height:22px;border-top:1px solid #696969;border-left:1px solid #696969;border-right:1px solid #e3e3e3;border-bottom:1px solid #e3e3e3;box-sizing:border-box"></div>
<div class="t" style="left:469px;top:54px;height:16px;line-height:16px;font-size:11.6px;color:#000">24/02/2019</div>
<div style="left:534px;top:53px;width:17px;height:19px;background:#f0f0f0;border-top:1px solid #e3e3e3;border-left:1px solid #e3e3e3;border-right:1px solid #696969;border-bottom:1px solid #696969;box-sizing:border-box"></div>
<div style="left:535px;top:54px;width:15px;height:17px;border-top:1px solid #fff;border-left:1px solid #fff;border-right:1px solid #a0a0a0;border-bottom:1px solid #a0a0a0;box-sizing:border-box"></div>
<div style="left:538px;top:61px;width:0;height:0;border-left:4px solid transparent;border-right:4px solid transparent;border-top:4px solid #000"></div>
<svg style="left:562px;top:53px" width="22" height="20" viewBox="0 0 22 20">
<path d="M3 9 A8 7 0 0 1 17 5 L20 2 L20 10 L12 10 L15 7 A5 4 0 0 0 7 9 Z" fill="#18c018" stroke="#0a7a0a" stroke-width="0.6"/>
<path d="M19 11 A8 7 0 0 1 5 15 L2 18 L2 10 L10 10 L7 13 A5 4 0 0 0 15 11 Z" fill="#10a810" stroke="#0a7a0a" stroke-width="0.6"/>
</svg>
<svg style="left:587px;top:52px" width="23" height="21" viewBox="0 0 23 21">
<rect x="4" y="0.5" width="4" height="20" fill="#e8e8e8" stroke="#777" stroke-width="0.8"/>
<rect x="0.5" y="5" width="22" height="4.5" fill="#e8e8e8" stroke="#777" stroke-width="0.8"/>
<path d="M3 6 V8 M6 6 V8 M9 6 V8 M12 6 V8 M15 6 V8 M18 6 V8 M21 6 V8" stroke="#555" stroke-width="0.6"/>
<path d="M5 12 H7 M5 14 H7 M5 16 H7 M5 18 H7" stroke="#555" stroke-width="0.6"/>
</svg>
<svg style="left:626px;top:51px" width="15" height="23" viewBox="0 0 15 23">
<path d="M6.5 0 Q7.5 4 9 6.5 Q9.5 4 10.5 2.5 Q11 6.5 12.5 9 Q14.5 12 14.5 15.5 Q14.5 21.5 8 22.5 Q1 22.5 0.5 16.5 Q0 12 1.5 8.5 Q2 11 3.5 12.5 Q3 6 6.5 0 Z" fill="#8c8c8c"/>
<path d="M7.5 12.5 Q10.5 15 10.3 18 Q10 21 7.5 21 Q4.8 20.8 4.8 18 Q5 15 7.5 12.5 Z" fill="#99bffa"/>
</svg>
<svg style="left:647px;top:52px" width="22" height="21" viewBox="0 0 22 21">
<path d="M11 1 L13.6 7.6 L21 8 L15.2 12.6 L17.2 20 L11 15.8 L4.8 20 L6.8 12.6 L1 8 L8.4 7.6 Z" fill="#a9a9a9" stroke="#555" stroke-width="1"/>
<path d="M11 4 L12.5 8.5 L11 13 Z" fill="#e8e8e8"/>
</svg>
<div class="t" style="left:677px;top:52px;height:20px;line-height:20px;font-family:'Liberation Serif',serif;font-size:17px;font-weight:bold;color:#a8a8a8">K</div>
<div class="t" style="left:736px;top:55px;height:16px;line-height:16px;font-size:11px;color:#fff">0</div>
<svg style="left:759px;top:54px" width="18" height="18" viewBox="0 0 18 18">
<defs><linearGradient id="fun" x1="0" x2="1"><stop offset="0" stop-color="#c8c8c8"/><stop offset="0.5" stop-color="#f4f4f4"/><stop offset="1" stop-color="#b8b8b8"/></linearGradient></defs>
<ellipse cx="9" cy="2.5" rx="8" ry="1.6" fill="#d8d8d8"/>
<path d="M1 2.5 L17 2.5 L10.3 10 L10.3 17 L7.7 17 L7.7 10 Z" fill="url(#fun)"/>
</svg>
<svg style="left:796px;top:54px" width="17" height="18" viewBox="0 0 17 18"><path d="M5 1 H12 V9 H16 L8.5 17 L1 9 H5 Z" fill="#777"/></svg>
<svg style="left:821px;top:54px" width="17" height="18" viewBox="0 0 17 18"><path d="M5 17 H12 V9 H16 L8.5 1 L1 9 H5 Z" fill="#777"/></svg>
<div style="left:842px;top:52px;width:353px;height:20px;background:#fff;border-top:1px solid #a0a0a0;border-left:1px solid #a0a0a0;border-right:1px solid #fff;border-bottom:1px solid #fff;box-sizing:border-box"></div>
<div style="left:843px;top:53px;width:351px;height:18px;border-top:1px solid #696969;border-left:1px solid #696969;border-right:1px solid #e3e3e3;border-bottom:1px solid #e3e3e3;box-sizing:border-box"></div>
<div style="left:844px;top:54px;width:349px;height:1px;background:#99bffa"></div>
<div style="left:844px;top:69px;width:349px;height:1px;background:#99bffa"></div>
<div class="t" style="left:846px;top:55px;height:16px;line-height:16px;font-size:11px;color:#333">Все</div>
<div style="left:1177px;top:54px;width:17px;height:16px;background:#f0f0f0;border-top:1px solid #e3e3e3;border-left:1px solid #e3e3e3;border-right:1px solid #696969;border-bottom:1px solid #696969;box-sizing:border-box"></div>
<div style="left:1178px;top:55px;width:15px;height:14px;border-top:1px solid #fff;border-left:1px solid #fff;border-right:1px solid #a0a0a0;border-bottom:1px solid #a0a0a0;box-sizing:border-box"></div>
<div style="left:1181px;top:60px;width:0;height:0;border-left:4px solid transparent;border-right:4px solid transparent;border-top:4px solid #999"></div>
<div style="left:314px;top:77px;width:884px;height:1px;background:#a0a0a0"></div>
<div style="left:314px;top:78px;width:881px;height:1px;background:#696969"></div>
<div style="left:314px;top:77px;width:1px;height:193px;background:#a0a0a0"></div>
<div style="left:315px;top:78px;width:1px;height:191px;background:#696969"></div>
<div style="left:316px;top:79px;width:879px;height:190px;background:#fff"></div>
<div style="left:316px;top:79px;width:17px;height:17px;background:#f0f0f0;border-top:1px solid #fff;border-left:1px solid #fff;border-right:1px solid #696969;border-bottom:1px solid #696969;box-sizing:border-box"></div>
<div style="left:317px;top:80px;width:15px;height:15px;border-right:1px solid #a0a0a0;border-bottom:1px solid #a0a0a0;box-sizing:border-box"></div>
<div style="left:333px;top:79px;width:75px;height:17px;background:#f0f0f0;border-top:1px solid #fff;border-left:1px solid #fff;border-right:1px solid #696969;border-bottom:1px solid #696969;box-sizing:border-box"></div>
<div style="left:334px;top:80px;width:73px;height:15px;border-right:1px solid #a0a0a0;border-bottom:1px solid #a0a0a0;box-sizing:border-box"></div>
<div class="t" style="left:339px;top:80px;height:17px;line-height:17px;color:#000">Пользова...</div>
<div style="left:408px;top:79px;width:75px;height:17px;background:#f0f0f0;border-top:1px solid #fff;border-left:1px solid #fff;border-right:1px solid #696969;border-bottom:1px solid #696969;box-sizing:border-box"></div>
<div style="left:409px;top:80px;width:73px;height:15px;border-right:1px solid #a0a0a0;border-bottom:1px solid #a0a0a0;box-sizing:border-box"></div>
<div class="t" style="left:414px;top:80px;height:17px;line-height:17px;color:#000">Должность</div>
<div style="left:483px;top:79px;width:75px;height:17px;background:#f0f0f0;border-top:1px solid #fff;border-left:1px solid #fff;border-right:1px solid #696969;border-bottom:1px solid #696969;box-sizing:border-box"></div>
<div style="left:484px;top:80px;width:73px;height:15px;border-right:1px solid #a0a0a0;border-bottom:1px solid #a0a0a0;box-sizing:border-box"></div>
<div class="t" style="left:489px;top:80px;height:17px;line-height:17px;color:#000">Дата реда...</div>
<div style="left:558px;top:79px;width:75px;height:17px;background:#f0f0f0;border-top:1px solid #fff;border-left:1px solid #fff;border-right:1px solid #696969;border-bottom:1px solid #696969;box-sizing:border-box"></div>
<div style="left:559px;top:80px;width:73px;height:15px;border-right:1px solid #a0a0a0;border-bottom:1px solid #a0a0a0;box-sizing:border-box"></div>
<div class="t" style="left:564px;top:80px;height:17px;line-height:17px;color:#000">Время ред...</div>
<div style="left:633px;top:79px;width:75px;height:17px;background:#f0f0f0;border-top:1px solid #fff;border-left:1px solid #fff;border-right:1px solid #696969;border-bottom:1px solid #696969;box-sizing:border-box"></div>
<div style="left:634px;top:80px;width:73px;height:15px;border-right:1px solid #a0a0a0;border-bottom:1px solid #a0a0a0;box-sizing:border-box"></div>
<div class="t" style="left:639px;top:80px;height:17px;line-height:17px;color:#000">ID</div>
<div style="left:708px;top:79px;width:487px;height:17px;background:#f0f0f0;border-top:1px solid #fff;border-left:1px solid #fff;border-right:1px solid #696969;border-bottom:1px solid #696969;box-sizing:border-box"></div>
<div style="left:709px;top:80px;width:485px;height:15px;border-right:1px solid #a0a0a0;border-bottom:1px solid #a0a0a0;box-sizing:border-box"></div>
<div style="left:1195px;top:78px;width:1px;height:191px;background:#e3e3e3"></div>
<div style="left:1196px;top:77px;width:2px;height:193px;background:#fff"></div>
<div style="left:315px;top:269px;width:881px;height:1px;background:#e3e3e3"></div>
<div style="left:314px;top:270px;width:884px;height:2px;background:#fff"></div>
<div style="left:1199px;top:47px;width:1px;height:227px;background:#a0a0a0"></div>
<div style="left:1200px;top:47px;width:1px;height:227px;background:#696969"></div>
<div style="left:312px;top:272px;width:889px;height:1px;background:#a0a0a0"></div>
<div style="left:312px;top:273px;width:889px;height:1px;background:#696969"></div>
<div style="left:312px;top:274px;width:889px;height:4px;background:#e8e8e8"></div>
<div style="left:312px;top:278px;width:889px;height:1px;background:#696969"></div>
<div style="left:312px;top:279px;width:889px;height:1px;background:#cfe0fb"></div>
<div style="left:312px;top:280px;width:889px;height:2px;background:#fff"></div>
<div style="left:1199px;top:308px;width:1px;height:411px;background:#a0a0a0"></div>
<div style="left:1200px;top:308px;width:1px;height:412px;background:#696969"></div>
<div style="left:314px;top:282px;width:887px;height:26px;background:#99bffa"></div>
<div style="left:312px;top:308px;width:887px;height:1px;background:#fff"></div>
<svg style="left:316px;top:284px" width="74" height="23" viewBox="0 0 74 23">
<defs><linearGradient id="tabg" x1="0" y1="0" x2="0" y2="1"><stop offset="0" stop-color="#ffffff"/><stop offset="0.45" stop-color="#f4f5f8"/><stop offset="1" stop-color="#c9cfdc"/></linearGradient></defs>
<path d="M1 23 V5 Q1 1 5 1 L58 1 Q62 1 64 5 L70 18 Q72 22 74 23 Z" fill="url(#tabg)"/>
</svg>
<div style="left:323px;top:290px;width:13px;height:13px;border:1px solid #1c4f8c;background:linear-gradient(135deg,#e6e6e0,#fff);box-sizing:border-box"></div>
<svg style="left:325px;top:292px" width="9" height="9" viewBox="0 0 9 9"><path d="M1 4.8 L3.6 7.4 L8.2 2" fill="none" stroke="#1aa01a" stroke-width="2"/></svg>
<div class="t" style="left:338px;top:288px;height:16px;line-height:16px;color:#000">Флаги</div>
<svg style="left:395px;top:287px" width="18" height="18" viewBox="0 0 18 18">
<defs><radialGradient id="qg" cx="0.4" cy="0.35" r="0.7"><stop offset="0" stop-color="#b8d4ff"/><stop offset="0.6" stop-color="#3f72d8"/><stop offset="1" stop-color="#1c44a8"/></radialGradient></defs>
<circle cx="9" cy="9" r="8.2" fill="url(#qg)" stroke="#dfe6f2" stroke-width="1.2"/>
</svg>
<div class="t" style="left:399px;top:288px;height:16px;line-height:16px;font-weight:bold;font-size:13px;color:#fff;width:10px;text-align:center">?</div>
<div class="t" style="left:415px;top:288px;height:16px;line-height:16px;color:#000">Прочти</div>
<div style="left:370px;top:315px;width:13px;height:13px;background:#fff;border-top:1px solid #a0a0a0;border-left:1px solid #a0a0a0;border-right:1px solid #fff;border-bottom:1px solid #fff;box-sizing:border-box"></div>
<div style="left:371px;top:316px;width:11px;height:11px;border-top:1px solid #696969;border-left:1px solid #696969;border-right:1px solid #e3e3e3;border-bottom:1px solid #e3e3e3;box-sizing:border-box"></div>
<div style="left:370px;top:330px;width:13px;height:13px;background:#fff;border-top:1px solid #a0a0a0;border-left:1px solid #a0a0a0;border-right:1px solid #fff;border-bottom:1px solid #fff;box-sizing:border-box"></div>
<div style="left:371px;top:331px;width:11px;height:11px;border-top:1px solid #696969;border-left:1px solid #696969;border-right:1px solid #e3e3e3;border-bottom:1px solid #e3e3e3;box-sizing:border-box"></div>
<svg style="left:373px;top:333px" width="7" height="7" viewBox="0 0 7 7"><path d="M0.5 3 L2.7 5.5 L6.5 0.8" fill="none" stroke="#000" stroke-width="1.6"/></svg>
<div class="t" style="left:388px;top:314px;height:16px;line-height:16px;color:#000">Отключить контроль уникальности номера</div>
<div class="t" style="left:388px;top:329px;height:16px;line-height:16px;color:#000">Автоматически обнулять текущий номер {N} в начале года</div>
<div class="t" style="left:320px;top:347px;height:16px;line-height:16px;color:#000">Филиал</div>
<div style="left:370px;top:348px;width:377px;height:21px;background:#f0f0f0;border-top:1px solid #a0a0a0;border-left:1px solid #a0a0a0;border-right:1px solid #fff;border-bottom:1px solid #fff;box-sizing:border-box"></div>
<div style="left:371px;top:349px;width:375px;height:19px;border-top:1px solid #696969;border-left:1px solid #696969;border-right:1px solid #e3e3e3;border-bottom:1px solid #e3e3e3;box-sizing:border-box"></div>
<div class="t" style="left:374px;top:350px;height:16px;line-height:16px;color:#6d6d6d">33</div>
<div style="left:728px;top:350px;width:17px;height:17px;background:#f0f0f0;border-top:1px solid #e3e3e3;border-left:1px solid #e3e3e3;border-right:1px solid #696969;border-bottom:1px solid #696969;box-sizing:border-box"></div>
<div style="left:729px;top:351px;width:15px;height:15px;border-top:1px solid #fff;border-left:1px solid #fff;border-right:1px solid #a0a0a0;border-bottom:1px solid #a0a0a0;box-sizing:border-box"></div>
<div style="left:733px;top:357px;width:0;height:0;border-left:4px solid transparent;border-right:4px solid transparent;border-top:4px solid #a0a0a0"></div>
<div class="t" style="left:333px;top:373px;height:16px;line-height:16px;color:#000">Слой</div>
<div style="left:370px;top:371px;width:377px;height:21px;background:#fff;border-top:1px solid #a0a0a0;border-left:1px solid #a0a0a0;border-right:1px solid #fff;border-bottom:1px solid #fff;box-sizing:border-box"></div>
<div style="left:371px;top:372px;width:375px;height:19px;border-top:1px solid #696969;border-left:1px solid #696969;border-right:1px solid #e3e3e3;border-bottom:1px solid #e3e3e3;box-sizing:border-box"></div>
<div class="t" style="left:374px;top:373px;height:16px;line-height:16px;color:#000">Документы</div>
<div style="left:728px;top:373px;width:17px;height:17px;background:#f0f0f0;border-top:1px solid #e3e3e3;border-left:1px solid #e3e3e3;border-right:1px solid #696969;border-bottom:1px solid #696969;box-sizing:border-box"></div>
<div style="left:729px;top:374px;width:15px;height:15px;border-top:1px solid #fff;border-left:1px solid #fff;border-right:1px solid #a0a0a0;border-bottom:1px solid #a0a0a0;box-sizing:border-box"></div>
<div style="left:733px;top:380px;width:0;height:0;border-left:4px solid transparent;border-right:4px solid transparent;border-top:4px solid #000"></div>
<div class="t" style="left:340px;top:394px;height:16px;line-height:16px;color:#000">Тип</div>
<div style="left:370px;top:394px;width:377px;height:21px;background:#f0f0f0;border-top:1px solid #a0a0a0;border-left:1px solid #a0a0a0;border-right:1px solid #fff;border-bottom:1px solid #fff;box-sizing:border-box"></div>
<div style="left:371px;top:395px;width:375px;height:19px;border-top:1px solid #696969;border-left:1px solid #696969;border-right:1px solid #e3e3e3;border-bottom:1px solid #e3e3e3;box-sizing:border-box"></div>
<div class="t" style="left:374px;top:396px;height:16px;line-height:16px;color:#6d6d6d">01 Документооборот.</div>
<div style="left:728px;top:396px;width:17px;height:17px;background:#f0f0f0;border-top:1px solid #e3e3e3;border-left:1px solid #e3e3e3;border-right:1px solid #696969;border-bottom:1px solid #696969;box-sizing:border-box"></div>
<div style="left:729px;top:397px;width:15px;height:15px;border-top:1px solid #fff;border-left:1px solid #fff;border-right:1px solid #a0a0a0;border-bottom:1px solid #a0a0a0;box-sizing:border-box"></div>
<div style="left:733px;top:403px;width:0;height:0;border-left:4px solid transparent;border-right:4px solid transparent;border-top:4px solid #a0a0a0"></div>
<div class="t" style="left:787px;top:351px;height:16px;line-height:16px;color:#000">Маска</div>
<div class="t" style="left:756px;top:373px;height:16px;line-height:16px;color:#000">Текущий {N}</div>
<div class="t" style="left:749px;top:396px;height:16px;line-height:16px;color:#000">Текущий {ND}</div>
<div style="left:824px;top:348px;width:348px;height:22px;background:#f0f0f0;border-top:1px solid #a0a0a0;border-left:1px solid #a0a0a0;border-right:1px solid #fff;border-bottom:1px solid #fff;box-sizing:border-box"></div>
<div style="left:825px;top:349px;width:346px;height:20px;border-top:1px solid #696969;border-left:1px solid #696969;border-right:1px solid #e3e3e3;border-bottom:1px solid #e3e3e3;box-sizing:border-box"></div>
<div style="left:1177px;top:348px;width:17px;height:21px;background:#f0f0f0;border:1px solid #6a6a6a;box-sizing:border-box"></div>
<div style="left:1178px;top:349px;width:15px;height:19px;border:1px solid #fff;box-sizing:border-box"></div>
<div class="t" style="left:1177px;top:352px;height:16px;line-height:16px;font-size:9px;color:#999;width:17px;text-align:center;letter-spacing:0.5px">...</div>
<div style="left:824px;top:371px;width:369px;height:22px;background:#f0f0f0;border-top:1px solid #a0a0a0;border-left:1px solid #a0a0a0;border-right:1px solid #fff;border-bottom:1px solid #fff;box-sizing:border-box"></div>
<div style="left:825px;top:372px;width:367px;height:20px;border-top:1px solid #696969;border-left:1px solid #696969;border-right:1px solid #e3e3e3;border-bottom:1px solid #e3e3e3;box-sizing:border-box"></div>
<div style="left:824px;top:394px;width:369px;height:22px;background:#f0f0f0;border-top:1px solid #a0a0a0;border-left:1px solid #a0a0a0;border-right:1px solid #fff;border-bottom:1px solid #fff;box-sizing:border-box"></div>
<div style="left:825px;top:395px;width:367px;height:20px;border-top:1px solid #696969;border-left:1px solid #696969;border-right:1px solid #e3e3e3;border-bottom:1px solid #e3e3e3;box-sizing:border-box"></div>
<div style="left:320px;top:417px;width:873px;height:1px;background:#a0a0a0"></div>
<div style="left:320px;top:417px;width:1px;height:268px;background:#a0a0a0"></div>
<div style="left:321px;top:418px;width:871px;height:1px;background:#696969"></div>
<div style="left:321px;top:418px;width:1px;height:266px;background:#696969"></div>
<div style="left:322px;top:419px;width:853px;height:248px;background:#fff"></div>
<div style="left:1192px;top:417px;width:1px;height:268px;background:#fff"></div>
<div style="left:320px;top:684px;width:873px;height:1px;background:#fff"></div>
<div style="left:1191px;top:418px;width:1px;height:266px;background:#e3e3e3"></div>
<div style="left:321px;top:683px;width:871px;height:1px;background:#e3e3e3"></div>
<div style="left:322px;top:419px;width:241px;height:17px;background:#f0f0f0;border-top:1px solid #fff;border-left:1px solid #fff;border-right:1px solid #696969;border-bottom:1px solid #696969;box-sizing:border-box"></div>
<div style="left:323px;top:420px;width:239px;height:15px;border-right:1px solid #a0a0a0;border-bottom:1px solid #a0a0a0;box-sizing:border-box"></div>
<div class="t" style="left:329px;top:420px;height:17px;line-height:17px;color:#000">Филиал</div>
<div style="left:563px;top:419px;width:70px;height:17px;background:#f0f0f0;border-top:1px solid #fff;border-left:1px solid #fff;border-right:1px solid #696969;border-bottom:1px solid #696969;box-sizing:border-box"></div>
<div style="left:564px;top:420px;width:68px;height:15px;border-right:1px solid #a0a0a0;border-bottom:1px solid #a0a0a0;box-sizing:border-box"></div>
<div class="t" style="left:570px;top:420px;height:17px;line-height:17px;color:#000">Визуальн...</div>
<div style="left:633px;top:419px;width:295px;height:17px;background:#f0f0f0;border-top:1px solid #fff;border-left:1px solid #fff;border-right:1px solid #696969;border-bottom:1px solid #696969;box-sizing:border-box"></div>
<div style="left:634px;top:420px;width:293px;height:15px;border-right:1px solid #a0a0a0;border-bottom:1px solid #a0a0a0;box-sizing:border-box"></div>
<div class="t" style="left:640px;top:420px;height:17px;line-height:17px;color:#000">Тип обложки</div>
<div style="left:928px;top:419px;width:247px;height:17px;background:#f0f0f0;border-top:1px solid #fff;border-left:1px solid #fff;border-right:1px solid #696969;border-bottom:1px solid #696969;box-sizing:border-box"></div>
<div style="left:929px;top:420px;width:245px;height:15px;border-right:1px solid #a0a0a0;border-bottom:1px solid #a0a0a0;box-sizing:border-box"></div>
<div class="t" style="left:935px;top:420px;height:17px;line-height:17px;color:#000">Маска автономера</div>
<div style="left:322px;top:436px;width:853px;height:231px;overflow:hidden">
<div class="t" style="left:5px;top:2px;width:240px;height:14px;line-height:14px;overflow:hidden;color:#000">Отдел развития Информационных технологий</div>
<div class="t" style="left:248px;top:2px;width:67px;height:14px;line-height:14px;overflow:hidden;color:#000">Документы</div>
<div class="t" style="left:318px;top:2px;width:292px;height:14px;line-height:14px;overflow:hidden;color:#000">Анкета соискателя.</div>
<div class="t" style="left:5px;top:16px;width:240px;height:14px;line-height:14px;overflow:hidden;color:#000">Административное управление</div>
<div class="t" style="left:248px;top:16px;width:67px;height:14px;line-height:14px;overflow:hidden;color:#000">Документы</div>
<div class="t" style="left:318px;top:16px;width:292px;height:14px;line-height:14px;overflow:hidden;color:#000">Анкеты.2</div>
<div class="t" style="left:5px;top:30px;width:240px;height:14px;line-height:14px;overflow:hidden;color:#000">Административное управление</div>
<div class="t" style="left:248px;top:30px;width:67px;height:14px;line-height:14px;overflow:hidden;color:#000">Документы</div>
<div class="t" style="left:318px;top:30px;width:292px;height:14px;line-height:14px;overflow:hidden;color:#000">Без маршрута.</div>
<div class="t" style="left:5px;top:44px;width:240px;height:14px;line-height:14px;overflow:hidden;color:#000">Головной офис</div>
<div class="t" style="left:248px;top:44px;width:67px;height:14px;line-height:14px;overflow:hidden;color:#000">Документы</div>
<div class="t" style="left:318px;top:44px;width:292px;height:14px;line-height:14px;overflow:hidden;color:#000">Бизнес-план.</div>
<div class="t" style="left:614px;top:44px;width:243px;height:14px;line-height:14px;overflow:hidden;color:#000">{N}-{N_DD}-{D_DD}</div>
<div class="t" style="left:5px;top:58px;width:240px;height:14px;line-height:14px;overflow:hidden;color:#000">Головной офис</div>
<div class="t" style="left:248px;top:58px;width:67px;height:14px;line-height:14px;overflow:hidden;color:#000">Документы</div>
<div class="t" style="left:318px;top:58px;width:292px;height:14px;line-height:14px;overflow:hidden;color:#000">Все</div>
<div class="t" style="left:614px;top:58px;width:243px;height:14px;line-height:14px;overflow:hidden;color:#000">{ND}{N}</div>
<div class="t" style="left:5px;top:72px;width:240px;height:14px;line-height:14px;overflow:hidden;color:#000">Головной офис</div>
<div class="t" style="left:248px;top:72px;width:67px;height:14px;line-height:14px;overflow:hidden;color:#000">Документы</div>
<div class="t" style="left:318px;top:72px;width:292px;height:14px;line-height:14px;overflow:hidden;color:#000">Все</div>
<div class="t" style="left:614px;top:72px;width:243px;height:14px;line-height:14px;overflow:hidden;color:#000">{N}{N}</div>
<div class="t" style="left:5px;top:86px;width:240px;height:14px;line-height:14px;overflow:hidden;color:#000">Административное управление</div>
<div class="t" style="left:248px;top:86px;width:67px;height:14px;line-height:14px;overflow:hidden;color:#000">Документы</div>
<div class="t" style="left:318px;top:86px;width:292px;height:14px;line-height:14px;overflow:hidden;color:#000">Входящий счет на оплату.</div>
<div class="t" style="left:614px;top:86px;width:243px;height:14px;line-height:14px;overflow:hidden;color:#000">{N}</div>
<div class="t" style="left:5px;top:100px;width:240px;height:14px;line-height:14px;overflow:hidden;color:#000">Краснодарский филиал</div>
<div class="t" style="left:248px;top:100px;width:67px;height:14px;line-height:14px;overflow:hidden;color:#000">Документы</div>
<div class="t" style="left:318px;top:100px;width:292px;height:14px;line-height:14px;overflow:hidden;color:#000">Выдача справки.</div>
<div class="t" style="left:614px;top:100px;width:243px;height:14px;line-height:14px;overflow:hidden;color:#000">{ND}-{D_DD}.{D_MM}</div>
<div class="t" style="left:5px;top:114px;width:240px;height:14px;line-height:14px;overflow:hidden;color:#000">Краснодарский филиал</div>
<div class="t" style="left:248px;top:114px;width:67px;height:14px;line-height:14px;overflow:hidden;color:#000">Документы</div>
<div class="t" style="left:318px;top:114px;width:292px;height:14px;line-height:14px;overflow:hidden;color:#000">Выдача справки.</div>
<div class="t" style="left:614px;top:114px;width:243px;height:14px;line-height:14px;overflow:hidden;color:#000">{ND}-{D_DD}.{D_MM}</div>
<div class="t" style="left:5px;top:128px;width:240px;height:14px;line-height:14px;overflow:hidden;color:#000">Краснодарский филиал</div>
<div class="t" style="left:248px;top:128px;width:67px;height:14px;line-height:14px;overflow:hidden;color:#000">Документы</div>
<div class="t" style="left:318px;top:128px;width:292px;height:14px;line-height:14px;overflow:hidden;color:#000">Выдача справки.</div>
<div class="t" style="left:614px;top:128px;width:243px;height:14px;line-height:14px;overflow:hidden;color:#000">{ND}-{D_DD}</div>
<div class="t" style="left:5px;top:142px;width:240px;height:14px;line-height:14px;overflow:hidden;color:#000">Головной офис</div>
<div class="t" style="left:248px;top:142px;width:67px;height:14px;line-height:14px;overflow:hidden;color:#000">Документы</div>
<div class="t" style="left:318px;top:142px;width:292px;height:14px;line-height:14px;overflow:hidden;color:#000">Гибкий маршрут.</div>
<div class="t" style="left:614px;top:142px;width:243px;height:14px;line-height:14px;overflow:hidden;color:#000">{UN}-{UNE}-{PN}-{DN}-{TN}-{CN}/{D_YY}-{D_MM}</div>
<div class="t" style="left:5px;top:156px;width:240px;height:14px;line-height:14px;overflow:hidden;color:#000">Административное управление</div>
<div class="t" style="left:248px;top:156px;width:67px;height:14px;line-height:14px;overflow:hidden;color:#000">Документы</div>
<div class="t" style="left:318px;top:156px;width:292px;height:14px;line-height:14px;overflow:hidden;color:#000">Деловые записки.</div>
<div class="t" style="left:5px;top:170px;width:240px;height:14px;line-height:14px;overflow:hidden;color:#000">Административное управление</div>
<div class="t" style="left:248px;top:170px;width:67px;height:14px;line-height:14px;overflow:hidden;color:#000">Документы</div>
<div class="t" style="left:318px;top:170px;width:292px;height:14px;line-height:14px;overflow:hidden;color:#000">Для демонстрации.</div>
<div class="t" style="left:5px;top:184px;width:240px;height:14px;line-height:14px;overflow:hidden;color:#000">Административное управление</div>
<div class="t" style="left:248px;top:184px;width:67px;height:14px;line-height:14px;overflow:hidden;color:#000">Документы</div>
<div class="t" style="left:318px;top:184px;width:292px;height:14px;line-height:14px;overflow:hidden;color:#000">Доверенности.</div>
<div class="t" style="left:5px;top:198px;width:240px;height:14px;line-height:14px;overflow:hidden;color:#000">Административное управление</div>
<div class="t" style="left:248px;top:198px;width:67px;height:14px;line-height:14px;overflow:hidden;color:#000">Документы</div>
<div class="t" style="left:318px;top:198px;width:292px;height:14px;line-height:14px;overflow:hidden;color:#000">Доверенности.</div>
<div class="t" style="left:5px;top:212px;width:240px;height:14px;line-height:14px;overflow:hidden;color:#000">Головной офис</div>
<div class="t" style="left:248px;top:212px;width:67px;height:14px;line-height:14px;overflow:hidden;color:#000">Документы</div>
<div class="t" style="left:318px;top:212px;width:292px;height:14px;line-height:14px;overflow:hidden;color:#000">Доверенность полученная.</div>
<div class="t" style="left:614px;top:212px;width:243px;height:14px;line-height:14px;overflow:hidden;color:#000">{D_YY}-{N}</div>
<div class="t" style="left:5px;top:226px;width:240px;height:14px;line-height:14px;overflow:hidden;color:#000">Административное управление</div>
<div class="t" style="left:248px;top:226px;width:67px;height:14px;line-height:14px;overflow:hidden;color:#000">Документы</div>
<div class="t" style="left:318px;top:226px;width:292px;height:14px;line-height:14px;overflow:hidden;color:#000">Доверенность.</div>
</div>
<div style="left:1175px;top:419px;width:16px;height:248px;background:#f0f0f0"></div>
<div style="left:1175px;top:480px;width:16px;height:21px;background:#cdcdcd"></div>
<svg style="left:1178px;top:423px" width="10" height="10" viewBox="0 0 10 10"><path d="M1.5 6.5 L5 3 L8.5 6.5" fill="none" stroke="#555" stroke-width="2"/></svg>
<svg style="left:1178px;top:652px" width="10" height="10" viewBox="0 0 10 10"><path d="M1.5 3.5 L5 7 L8.5 3.5" fill="none" stroke="#555" stroke-width="2"/></svg>
<div style="left:322px;top:667px;width:853px;height:16px;background:#f0f0f0"></div>
<div style="left:339px;top:667px;width:664px;height:16px;background:#cdcdcd"></div>
<svg style="left:326px;top:670px" width="10" height="10" viewBox="0 0 10 10"><path d="M6.5 1.5 L3 5 L6.5 8.5" fill="none" stroke="#555" stroke-width="2"/></svg>
<svg style="left:1161px;top:670px" width="10" height="10" viewBox="0 0 10 10"><path d="M3.5 1.5 L7 5 L3.5 8.5" fill="none" stroke="#555" stroke-width="2"/></svg>
<div style="left:1175px;top:667px;width:16px;height:16px;background:#f0f0f0"></div>
<div style="left:320px;top:691px;width:75px;height:23px;background:#f0f0f0;border:1px solid #696969;box-sizing:border-box"></div>
<div class="t" style="left:320px;top:694px;height:16px;line-height:16px;width:75px;text-align:center;color:#000">Добавить</div>
<div style="left:406px;top:691px;width:75px;height:23px;background:#f0f0f0;border:1px solid #adadad;box-sizing:border-box"></div>
<div class="t" style="left:406px;top:694px;height:16px;line-height:16px;width:75px;text-align:center;color:#a0a0a0">Удалить</div>
</body></html>
